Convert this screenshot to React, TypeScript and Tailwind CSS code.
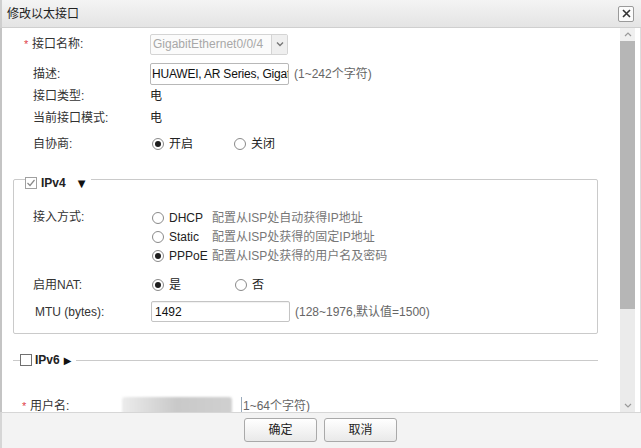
import React from "react";

const font = { fontFamily: '"Liberation Sans", "Noto Sans CJK SC", sans-serif' };

function Radio({ checked }: { checked?: boolean }) {
  return (
    <span className="flex h-[12px] w-[12px] flex-none items-center justify-center rounded-full border border-[#8a8a8a] bg-white">
      {checked ? <span className="h-[6px] w-[6px] rounded-full bg-[#1e1e1e]" /> : null}
    </span>
  );
}

function RadioOpt({ checked, label, width }: { checked?: boolean; label: string; width: string }) {
  return (
    <div className={`flex items-center gap-[5px] ${width}`}>
      <Radio checked={checked} />
      <span className="text-[#222]">{label}</span>
    </div>
  );
}

function Star() {
  return <span className="w-[8px] text-[11px] text-[#e0404a]">*</span>;
}

export default function App() {
  return (
    <div style={font} className="flex h-[448px] w-[641px] flex-col overflow-hidden bg-white text-[12px] text-[#333]">
      {/* title bar */}
      <div className="flex h-[28px] flex-none items-center justify-between border-b border-l-2 border-[#cfcfcf] bg-gradient-to-b from-[#f4f4f4] to-[#e4e4e4] pl-[5px] pr-[7px]">
        <span className="text-[12px] text-[#222]">修改以太接口</span>
        <button className="flex h-[16px] w-[16px] items-center justify-center rounded-[2px] border border-[#9a9a9a] bg-[#fbfbfb]">
          <svg width="9" height="9" viewBox="0 0 9 9">
            <path d="M1 1 L8 8 M8 1 L1 8" stroke="#333" strokeWidth="1.6" />
          </svg>
        </button>
      </div>

      {/* body */}
      <div className="flex min-h-0 flex-1 border-l-2 border-[#c4c4c4]">
        <div className="min-w-0 flex-1 overflow-hidden pt-[5px]">
          <div className="flex h-[22px] items-center">
            <div className="flex w-[148px] items-center pl-[22px]">
              <Star />
              <span>接口名称:</span>
            </div>
            <div className="flex h-[21px] w-[138px] items-center overflow-hidden rounded-[2px] border border-[#d4d4d4] bg-[#fbfbfb]">
              <span className="flex-1 whitespace-nowrap pl-[2px] text-[#a8a8a8]">GigabitEthernet0/0/4</span>
              <span className="flex h-full w-[16px] items-center justify-center border-l border-[#d4d4d4] bg-[#efefef]">
                <svg width="8" height="6" viewBox="0 0 8 6">
                  <path d="M1 1.5 L4 4.5 L7 1.5" stroke="#777" strokeWidth="1.4" fill="none" />
                </svg>
              </span>
            </div>
          </div>

          <div className="mt-[8px] flex h-[22px] items-center">
            <div className="w-[148px] pl-[31px]">描述:</div>
            <div className="flex h-[22px] w-[139px] items-center overflow-hidden rounded-[2px] border border-[#b8b8b8] bg-white">
              <span className="overflow-hidden whitespace-nowrap pl-[1px] tracking-[-0.2px] text-[#111]">HUAWEI, AR Series, Gigat</span>
            </div>
            <span className="ml-[5px] text-[#666]">(1~242个字符)</span>
          </div>

          <div className="flex h-[22px] items-center">
            <div className="w-[148px] pl-[31px]">接口类型:</div>
            <span className="text-[#222]">电</span>
          </div>
          <div className="flex h-[22px] items-center">
            <div className="w-[148px] pl-[31px]">当前接口模式:</div>
            <span className="text-[#222]">电</span>
          </div>
          <div className="mt-[4px] flex h-[22px] items-center">
            <div className="w-[150px] pl-[31px]">自协商:</div>
            <RadioOpt checked label="开启" width="w-[82px]" />
            <RadioOpt label="关闭" width="w-[60px]" />
          </div>

          {/* IPv4 */}
          <fieldset className="ml-[11px] mt-[12px] w-[585px] rounded-[2px] border border-[#cacaca] pb-[11px]">
            <legend className="ml-[11px] pt-[8px]">
              <div className="flex h-[16px] items-center pr-[6px]">
                <span className="flex h-[12px] w-[12px] items-center justify-center border border-[#a0a0a0] bg-white">
                  <svg width="10" height="10" viewBox="0 0 10 10">
                    <path d="M1.5 5 L4 7.5 L8.5 2" stroke="#8a8a8a" strokeWidth="1.2" fill="none" />
                  </svg>
                </span>
                <span className="ml-[4px] text-[12px] font-bold text-[#222]">IPv4</span>
                <span className="ml-[12px] text-[10px] text-[#111]" style={{ fontFamily: '"DejaVu Sans", sans-serif' }}>▼</span>
              </div>
            </legend>

            <div className="mt-[17px] flex">
              <div className="w-[138px] pl-[19px] leading-[19px]">接入方式:</div>
              <div className="flex flex-col">
                <div className="flex h-[19px] items-center">
                  <RadioOpt label="DHCP" width="w-[60px]" />
                  <span className="text-[#777]">配置从ISP处自动获得IP地址</span>
                </div>
                <div className="flex h-[19px] items-center">
                  <RadioOpt label="Static" width="w-[60px]" />
                  <span className="text-[#777]">配置从ISP处获得的固定IP地址</span>
                </div>
                <div className="flex h-[19px] items-center">
                  <RadioOpt checked label="PPPoE" width="w-[60px]" />
                  <span className="text-[#777]">配置从ISP处获得的用户名及密码</span>
                </div>
              </div>
            </div>

            <div className="mt-[11px] flex h-[18px] items-center">
              <div className="w-[138px] pl-[19px]">启用NAT:</div>
              <RadioOpt checked label="是" width="w-[83px]" />
              <RadioOpt label="否" width="w-[40px]" />
            </div>

            <div className="mt-[7px] flex h-[21px] items-center">
              <div className="w-[137px] pl-[21px]">MTU (bytes):</div>
              <div className="flex h-[21px] w-[139px] items-center rounded-[2px] border border-[#c4c4c4] bg-white pl-[3px] text-[#111] shadow-[inset_0_1px_1px_rgba(0,0,0,0.06)]">
                1492
              </div>
              <span className="ml-[5px] text-[#666]">(128~1976,默认值=1500)</span>
            </div>
          </fieldset>

          {/* IPv6 */}
          <fieldset className="ml-[11px] mt-[18px] w-[585px] border-x-0 border-b-0 border-t border-[#cacaca]">
            <legend className="ml-[7px]">
              <div className="flex h-[16px] items-center pr-[5px]">
                <span className="h-[12px] w-[12px] border border-[#707070] bg-white" />
                <span className="ml-[3px] text-[12px] font-bold text-[#222]">IPv6</span>
                <span className="ml-[4px] text-[10px] text-[#111]" style={{ fontFamily: '"DejaVu Sans", sans-serif' }}>▶</span>
              </div>
            </legend>
          </fieldset>

          <div className="mt-[29px] flex h-[18px] items-center">
            <div className="flex w-[120px] items-center pl-[20px]">
              <Star />
              <span>用户名:</span>
            </div>
            <div className="h-[18px] w-[110px] rounded-[3px] bg-gradient-to-r from-[#ececec] via-[#c9c9c9] to-[#d0d0d0] blur-[1px]" />
            <span className="ml-[9px] border-l border-[#9ab] pl-[1px] text-[#666]">1~64个字符)</span>
          </div>
        </div>

        {/* scrollbar */}
        <div className="flex w-[15px] flex-none flex-col bg-[#ebebeb]">
          <div className="flex h-[13px] items-center justify-center bg-[#f0f0f0]">
            <svg width="8" height="5" viewBox="0 0 8 5">
              <path d="M1 4 L4 1 L7 4" stroke="#9a9a9a" strokeWidth="1.2" fill="none" />
            </svg>
          </div>
          <div className="h-[268px] bg-[#b6b6b6]" />
          <div className="flex-1" />
          <div className="flex h-[14px] items-center justify-center">
            <svg width="8" height="5" viewBox="0 0 8 5">
              <path d="M1 1 L4 4 L7 1" stroke="#9a9a9a" strokeWidth="1.2" fill="none" />
            </svg>
          </div>
        </div>
        <div className="w-[6px] flex-none border-r-[1px] border-[#dcdcdc] bg-white" />
      </div>

      {/* footer */}
      <div className="flex h-[36px] flex-none items-center justify-center gap-[7px] border-l-2 border-t border-[#d6d6d6] bg-[#f3f3f3] pb-[2px] pr-[2px]">
        <button className="h-[24px] w-[73px] rounded-[3px] border border-[#a9a9a9] bg-gradient-to-b from-white to-[#e9e9e9] text-[12px] text-[#222]">
          确定
        </button>
        <button className="h-[24px] w-[73px] rounded-[3px] border border-[#a9a9a9] bg-gradient-to-b from-white to-[#e9e9e9] text-[12px] text-[#222]">
          取消
        </button>
      </div>
    </div>
  );
}
